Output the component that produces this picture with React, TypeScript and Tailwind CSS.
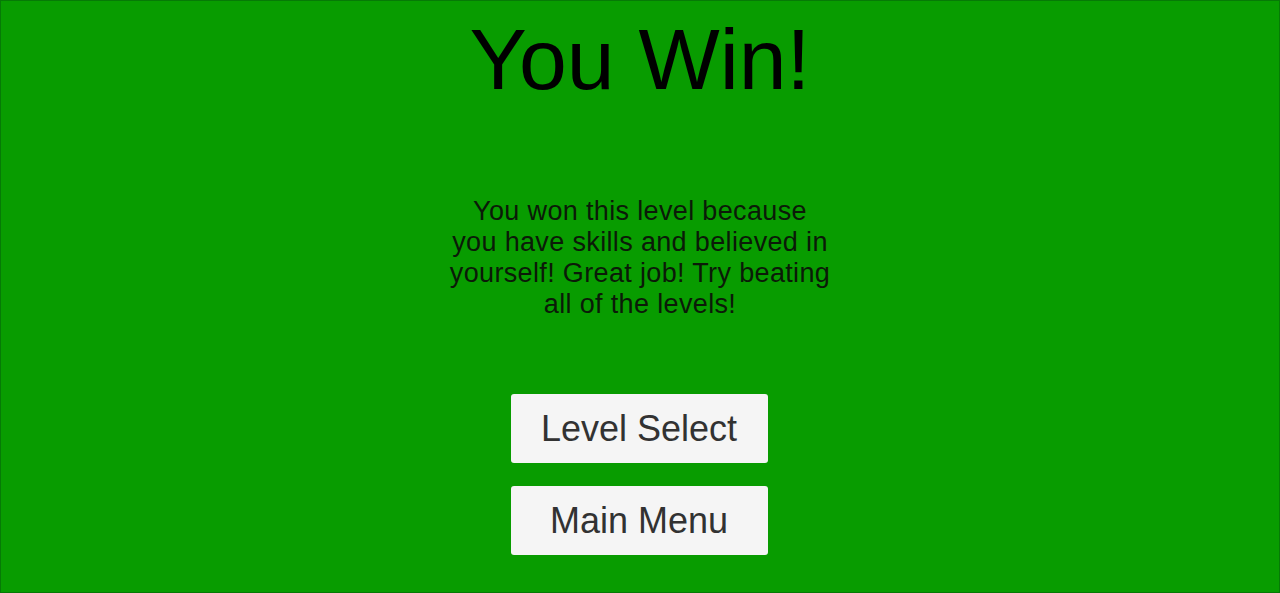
export default function App() {
  return (
    <div
      className="flex h-[593px] w-full flex-col items-center border border-[#067a06] bg-[#089c00] text-black"
      style={{ fontFamily: '"Liberation Sans", Arial, sans-serif' }}
    >
      <h1 className="mt-[15px] text-[86px] leading-none">You Win!</h1>

      <p className="mt-[94px] text-center text-[27px] leading-[31px] tracking-[0.35px] text-[#0b1a08]">
        You won this level because
        <br />
        you have skills and believed in
        <br />
        yourself! Great job! Try beating
        <br />
        all of the levels!
      </p>

      <div className="mt-[74px] flex flex-col gap-[23px] pr-[2px]">
        <button className="flex h-[69px] w-[257px] items-center justify-center rounded-[3px] bg-[#f5f5f5] text-[36px] text-[#323232]">
          Level Select
        </button>
        <button className="flex h-[69px] w-[257px] items-center justify-center rounded-[3px] bg-[#f5f5f5] text-[36px] text-[#323232]">
          Main Menu
        </button>
      </div>
    </div>
  );
}
